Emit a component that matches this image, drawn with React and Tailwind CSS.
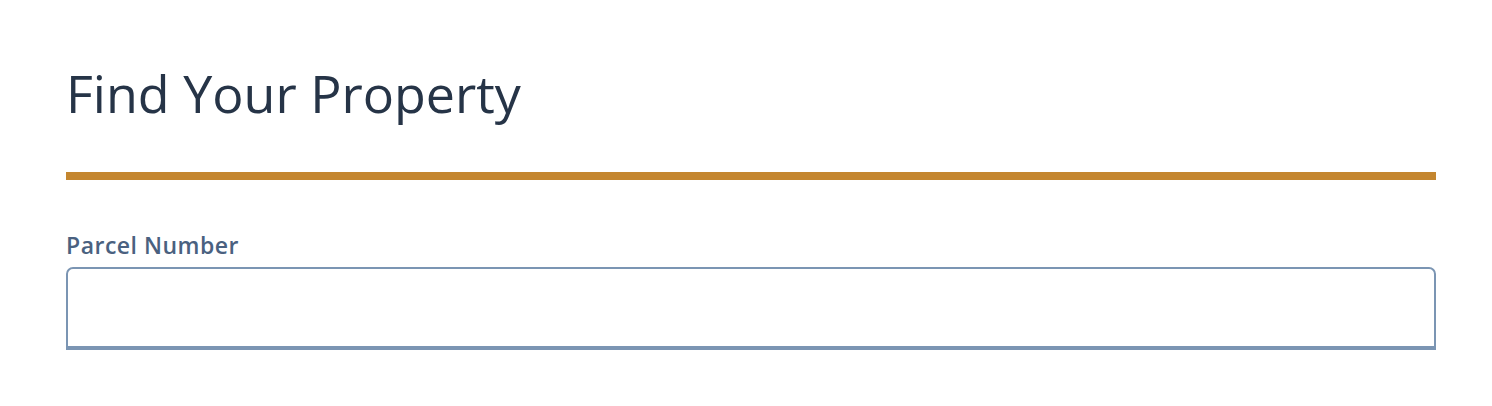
import React from 'react';

export default function App() {
  return (
    <div className="min-h-screen bg-white pl-[66px] pr-[56px] pt-[57px]" style={{ fontFamily: '"Open Sans", sans-serif' }}>
      <h1 className="text-[52px] leading-[72px] font-normal text-[#263447]">Find Your Property</h1>

      <div className="mt-[43px] h-[8px] bg-[#c4862f]" />

      <label htmlFor="parcel" className="mt-[50px] block text-[23px] leading-[30px] font-semibold tracking-[0.5px] text-[#4a6180]">
        Parcel Number
      </label>
      <input
        id="parcel"
        type="text"
        className="mt-[7px] block h-[83px] w-full rounded-t-[7px] border-2 border-b-4 border-[#7b95b3] bg-white px-4 text-[20px] outline-none"
      />
    </div>
  );
}
